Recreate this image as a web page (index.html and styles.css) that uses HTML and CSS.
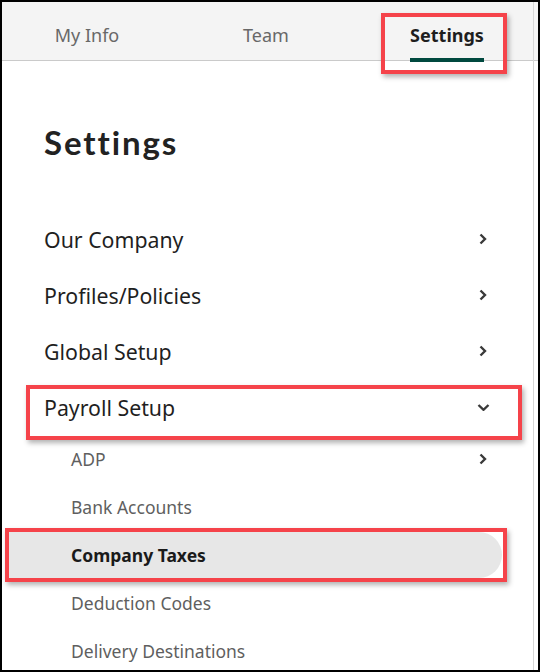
FILE: index.html
```html
<!DOCTYPE html>
<html>
<head>
<meta charset="utf-8">
<link rel="stylesheet" href="styles.css">
</head>
<body>
<div class="frame">
  <div class="tabs">
    <div class="tab tab-myinfo"><span class="label">My Info</span></div>
    <div class="tab tab-team"><span class="label">Team</span></div>
    <div class="tab tab-settings active"><span class="label">Settings</span></div>
  </div>
  <div class="content">
    <h1 class="title">Settings</h1>
    <ul class="menu">
      <li class="item"><span>Our Company</span><svg class="chev" viewBox="0 0 8 12"><path d="M1.5 1.5 L6 6 L1.5 10.5"/></svg></li>
      <li class="item"><span>Profiles/Policies</span><svg class="chev" viewBox="0 0 8 12"><path d="M1.5 1.5 L6 6 L1.5 10.5"/></svg></li>
      <li class="item"><span>Global Setup</span><svg class="chev" viewBox="0 0 8 12"><path d="M1.5 1.5 L6 6 L1.5 10.5"/></svg></li>
      <li class="item"><span>Payroll Setup</span><svg class="chev down" viewBox="0 0 13 7"><path d="M1.5 1 L6.5 5.8 L11.5 1"/></svg></li>
    </ul>
    <ul class="submenu">
      <li class="sub"><span>ADP</span><svg class="chev" viewBox="0 0 8 12"><path d="M1.5 1.5 L6 6 L1.5 10.5"/></svg></li>
      <li class="sub"><span>Bank Accounts</span></li>
      <li class="sub selected"><span>Company Taxes</span></li>
      <li class="sub"><span>Deduction Codes</span></li>
      <li class="sub"><span>Delivery Destinations</span></li>
    </ul>
  </div>
  <div class="edge"></div>
  <div class="edge-blue"></div>
  <div class="mark mark-settings"></div>
  <div class="mark mark-payroll"></div>
  <div class="mark mark-taxes"></div>
</div>
</body>
</html>
```
FILE: styles.css
```css
* { box-sizing: border-box; }
html, body { margin: 0; padding: 0; background: #fff; }
.frame {
  position: relative;
  width: 540px;
  height: 672px;
  border: 2px solid #000;
  overflow: hidden;
  font-family: "Noto Sans", "Open Sans", sans-serif;
}
.tabs {
  height: 59px;
  background: #f4f4f4;
  border-bottom: 1px solid #cacaca;
  display: flex;
  align-items: flex-end;
}
.tab {
  display: flex;
  justify-content: center;
  font-size: 18px;
  color: #686868;
}
.label {
  display: block;
  line-height: 24px;
  padding-bottom: 11px;
  border-bottom: 4px solid transparent;
  margin-bottom: -2px;
}
.tab-myinfo { width: 170px; }
.tab-team { width: 188px; }
.tab-settings { width: 174px; }
.tab.active .label { color: #1e1e1e; font-weight: 700; border-bottom-color: #00493f; }
.content { padding: 0 0 0 42px; }
.title {
  margin: 60px 0 0 0;
  font-family: "Lato", "Inter", sans-serif;
  font-weight: 700;
  font-size: 33px;
  letter-spacing: 1.9px;
  line-height: 42px;
  color: #222;
}
.menu { list-style: none; margin: 48px 0 0 0; padding: 0; }
.item {
  height: 56px;
  display: flex;
  align-items: center;
  justify-content: space-between;
  font-size: 21.3px;
  color: #1f1f1f;
  padding-right: 51px;
}
.chev { width: 8px; height: 12px; fill: none; stroke: #3a3a3a; stroke-width: 2.4; }
.chev.down { width: 13px; height: 7px; margin-right: -3px; }
.submenu { list-style: none; margin: 0; padding: 0; }
.sub {
  height: 48px;
  display: flex;
  align-items: center;
  justify-content: space-between;
  font-size: 17.5px;
  color: #5f5f5f;
  padding-left: 27px;
  padding-right: 51px;
}
.sub.selected {
  margin-left: -36px;
  padding-left: 63px;
  margin-right: 36px;
  background: #e7e7e7;
  border-radius: 0 23px 23px 0;
  color: #1a1a1a;
  font-weight: 700;
  height: 46px;
  margin-top: 1px;
  margin-bottom: 1px;
}
.edge {
  position: absolute;
  right: 4px;
  top: 0;
  bottom: 0;
  width: 1px;
  background: #d6d6d6;
}
.edge-blue {
  position: absolute;
  right: -2px;
  top: 330px;
  height: 34px;
  width: 2px;
  background: #1f4f8f;
}
.mark {
  position: absolute;
  border: 4px solid #f5434a;
  box-shadow: 2px 3px 5px rgba(0,0,0,0.3);
}
.mark-settings { left: 379px; top: 11px; width: 126px; height: 61px; }
.mark-payroll { left: 24px; top: 383px; width: 496px; height: 55px; }
.mark-taxes { left: 3px; top: 526px; width: 502px; height: 54px; }
```
